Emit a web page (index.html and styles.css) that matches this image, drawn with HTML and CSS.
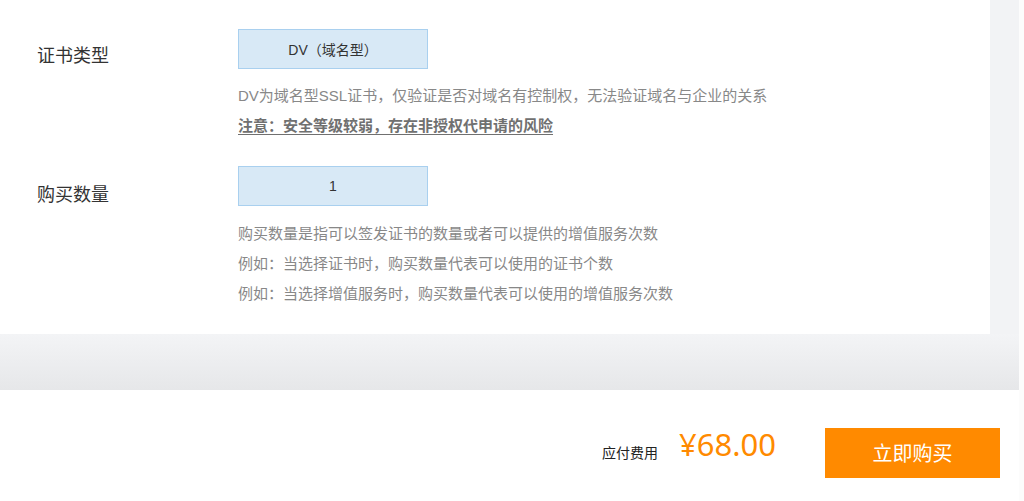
FILE: index.html
```html
<!DOCTYPE html>
<html lang="zh-CN">
<head>
<meta charset="utf-8">
<title>SSL证书购买</title>
<link rel="stylesheet" href="styles.css">
</head>
<body>
<div class="page">
  <div class="panel">
    <div class="row">
      <div class="label">证书类型</div>
      <div class="field">
        <div class="choice">DV（域名型）</div>
        <div class="tips">
          <p>DV为域名型SSL证书，仅验证是否对域名有控制权，无法验证域名与企业的关系</p>
          <p class="warn">注意：安全等级较弱，存在非授权代申请的风险</p>
        </div>
      </div>
    </div>
    <div class="row">
      <div class="label">购买数量</div>
      <div class="field">
        <div class="choice">1</div>
        <div class="tips">
          <p>购买数量是指可以签发证书的数量或者可以提供的增值服务次数</p>
          <p>例如：当选择证书时，购买数量代表可以使用的证书个数</p>
          <p>例如：当选择增值服务时，购买数量代表可以使用的增值服务次数</p>
        </div>
      </div>
    </div>
  </div>
  <div class="band"></div>
  <div class="footer">
    <span class="fee-label">应付费用</span>
    <span class="price">¥68.00</span>
    <button class="buy">立即购买</button>
  </div>
</div>
</body>
</html>
```

FILE: styles.css
```css
* { box-sizing: border-box; }
html, body { margin: 0; padding: 0; }
body {
  background: #fcfcfc;
  font-family: "Liberation Sans", "Noto Sans CJK SC", sans-serif;
  color: #333;
}
.page {
  width: 1019px;
  background: #f2f3f5;
}
.panel {
  width: 990px;
  background: #fff;
  padding: 29px 0 25px 0;
}
.row {
  display: flex;
}
.row + .row { margin-top: 25px; }
.label {
  width: 238px;
  padding-left: 37px;
  padding-top: 13px;
  font-size: 18px;
  line-height: 28px;
  color: #333;
}
.row + .row .label { padding-top: 15px; }
.field { display: flex; flex-direction: column; }
.choice {
  width: 190px;
  height: 40px;
  background: #d8e9f6;
  border: 1px solid #a9d0ef;
  display: flex;
  align-items: center;
  justify-content: center;
  font-size: 14px;
  color: #333;
}
.tips { margin-top: 12px; }
.tips p {
  margin: 0;
  font-size: 15px;
  line-height: 30px;
  color: #888;
}
.tips p.warn {
  font-weight: bold;
  color: #707070;
  text-decoration: underline;
  text-underline-offset: 3px;
}
.row + .row .tips { margin-top: 13px; }
.band {
  height: 56px;
  background: linear-gradient(#f3f4f6, #e6e7e9);
}
.footer {
  background: #fff;
  height: 111px;
  display: flex;
  align-items: center;
  justify-content: flex-end;
  padding: 14px 19px 0 0;
}
.fee-label {
  font-size: 14px;
  color: #222;
  margin-top: -2px;
}
.price {
  margin-left: 21px;
  font-family: "Noto Sans", "Noto Sans CJK SC", sans-serif;
  font-size: 31px;
  color: #ff8a00;
  line-height: 40px;
  margin-top: -17px;
}
.buy {
  margin-left: 49px;
  width: 175px;
  height: 50px;
  border: none;
  background: #ff8a00;
  color: #fff;
  font-family: "Noto Sans CJK SC", sans-serif;
  font-size: 20px;
  padding: 0;
}
```
